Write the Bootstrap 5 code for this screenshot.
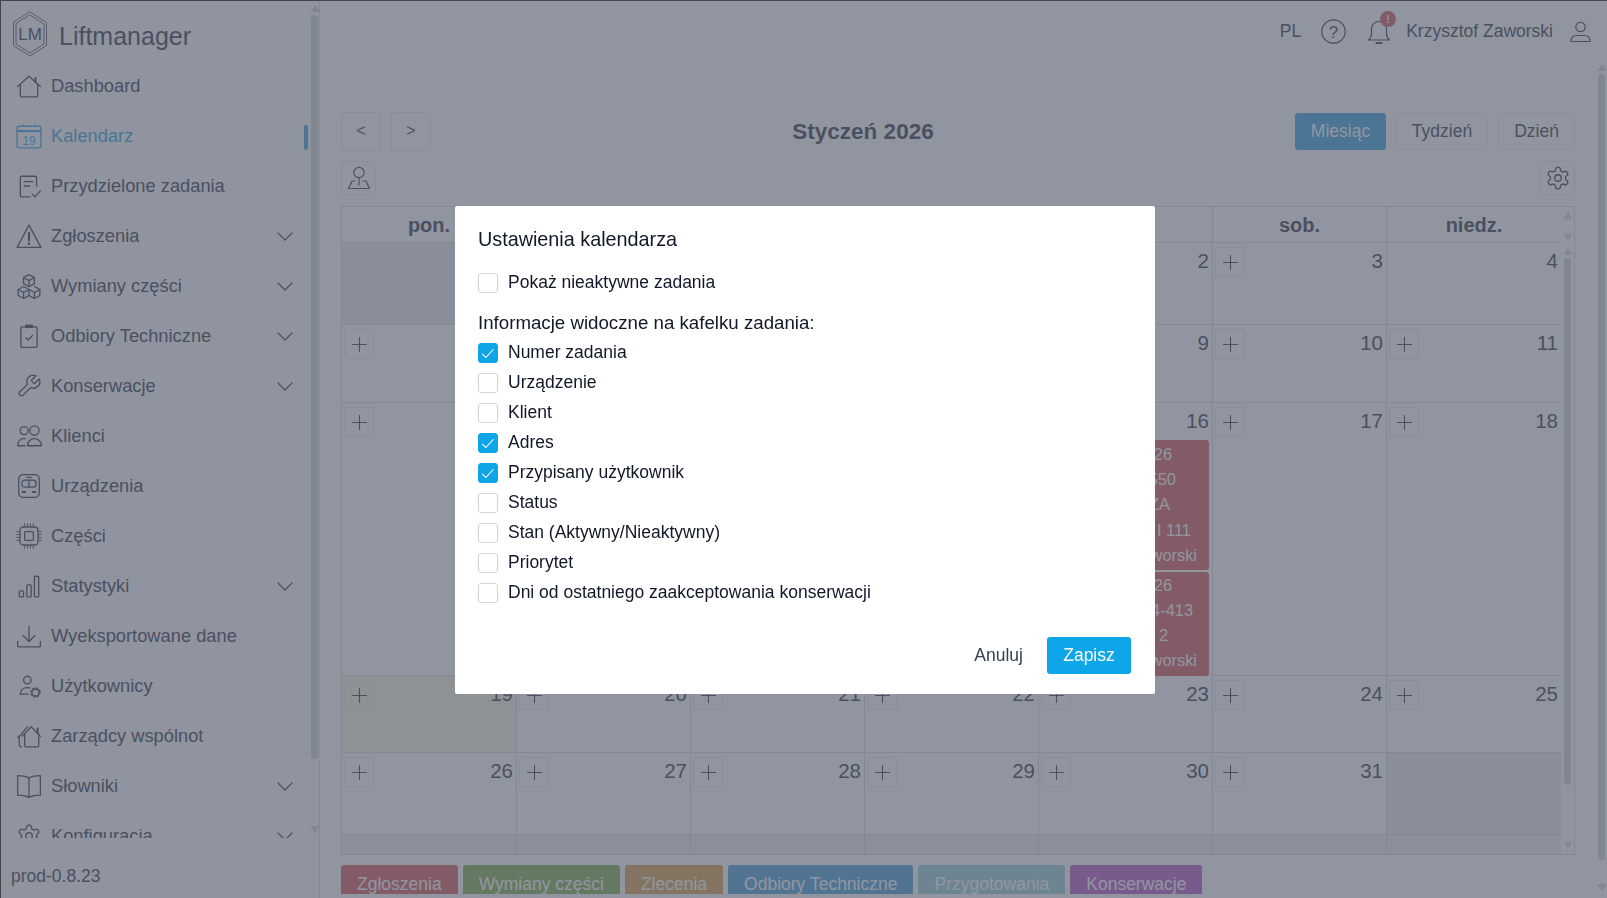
<!DOCTYPE html>
<html lang="pl">
<head>
  <meta charset="UTF-8" />
  <title>Liftmanager</title>
  <meta name="viewport" content="width=device-width, initial-scale=1.0" />
  <link href="https://cdn.jsdelivr.net/npm/bootstrap@5.3.0/dist/css/bootstrap.min.css" rel="stylesheet">
  <style>
    html, body { height: 100%; overflow: hidden; }
    body { font-family: "Liberation Sans", Arial, sans-serif; font-size: 17.5px; line-height: 1.3; color: #72757f; background: #fff; }
    svg.ico { fill: none; stroke: currentColor; stroke-width: 1.2; stroke-linecap: round; stroke-linejoin: round; flex: none; }

    .app { height: 898px; }
    .side { width: 320px; flex: none; border-right: 1px solid #e6e7ea; background: #fcfcfd; }
    .side-scroll { height: 838px; overflow: hidden; flex: none; }
    .side-items { width: 311px; flex: none; }
    .brand { height: 61px; padding: 11px 0 0 12px; gap: 11px; font-size: 25px; flex: none; }
    .brand svg.ico { stroke-width: .8; }
    .brand-name { margin-top: 9px; }
    .side-link { height: 50px; padding-left: 16px; padding-right: 18px; color: #72757f; font-size: 18.3px; text-decoration: none; position: relative; flex: none; }
    .side-link svg.ico { width: 26px; height: 26px; margin-right: 9px; }
    .side-link.on { color: #72bce8; }
    .side-link.on::after { content: ""; position: absolute; right: 3px; top: 14px; width: 4px; height: 25px; border-radius: 2px; background: #72bce8; }
    .side-link svg.chev { width: 16px; height: 16px; margin: 0 0 0 auto; }
    .version { padding: 27px 0 0 11px; }

    .vbar { display: flex; flex-direction: column; align-items: center; flex: none; }
    .vbar i { display: block; width: 0; height: 0; border-left: 5px solid transparent; border-right: 5px solid transparent; flex: none; }
    .vbar i.up { border-bottom: 7px solid #dfe0e4; }
    .vbar i.down { border-top: 7px solid #dfe0e4; margin-top: auto; }
    .vbar b { display: block; width: 100%; background: #dfe0e4; border-radius: 4px; flex: none; }
    .vbar-side { width: 7px; height: 838px; padding: 5px 0; }
    .vbar-side b { height: 744px; margin-top: 3px; }
    .vbar-page { width: 7px; margin-left: 23px; padding: 3px 0 7px; }
    .vbar-page b { height: 786px; margin-top: 3px; }
    .vbar-head { width: 13px; height: 36px; padding: 5px 0 2px; }
    .vbar-body { width: 13px; height: 611px; padding: 5px 0; }
    .vbar-body b { width: 7px; height: 527px; margin-top: 3px; }
    .vbar-body i, .vbar-head i { border-left-width: 4px; border-right-width: 4px; }

    .main { min-width: 0; }
    .top-bar { height: 61px; padding: 2px 16px 0 0; }
    .tg-15 { margin-left: 15px; } .tg-17 { margin-left: 17px; } .tg-20 { margin-left: 20px; } .tg-21 { margin-left: 21px; }
    .bell-wrap { position: relative; display: flex; }
    .bell-dot { position: absolute; left: 13px; top: -8px; width: 16px; height: 16px; border-radius: 50%; background: #e08a8c; color: #fff; font-size: 11px; font-weight: 700; line-height: 16px; text-align: center; }
    .page { padding-left: 21px; }
    .page-inner { width: 1234px; flex: none; }

    .tool { background: transparent; border: 1px solid #f0f0f2; border-radius: 3px; color: #72757f; font-size: 17.5px; padding: 0; display: flex; align-items: center; justify-content: center; }
    .tool-nav { width: 40px; height: 39px; font-size: 16px; }
    .tool-view { height: 37px; }
    .tv-m { width: 91px; } .tv-t { width: 92px; } .tv-d { width: 77px; }
    .tool-view.on { background: #72bce8; border-color: #72bce8; color: #fff; }
    .tool-ico { width: 35px; height: 34px; }
    .tool-row { gap: 10px; }
    .cal-title { font-size: 22.5px; font-weight: 700; margin: 0; color: #72757f; }
    .nav-row { margin-top: 51px; height: 39px; }
    .opt-row { margin-top: 10px; height: 34px; }

    .cal-box { margin-top: 11px; width: 1234px; height: 649px; border: 1px solid #e4e5e8; }
    .cal-grid { display: grid; grid-template-columns: 175px repeat(6, 174px); grid-template-rows: 36px 82px 78px 273px 77px 82px 19px; width: 1219px; flex: none; }
    .cal-head { font-weight: 700; font-size: 20px; text-align: center; line-height: 36px; border-right: 1px solid #e4e5e8; border-bottom: 1px solid #e4e5e8; }
    .cal-cell { border-right: 1px solid #e4e5e8; border-bottom: 1px solid #e4e5e8; padding: 4px 3px 0 2px; position: relative; min-width: 0; }
    .cal-cell:nth-child(7n), .cal-head:nth-child(7) { border-right: 0; }
    .cal-cell.off { background: #f1f1f2; }
    .cal-cell.now { background: #f9f8e6; }
    .cal-cell.tail { background: #f3f3f1; padding: 0; border-bottom: 0; }
    .add-btn { width: 30px; height: 30px; padding: 0; border: 1px solid #f0f0f2; border-radius: 2px; background: transparent; color: #72757f; display: flex; align-items: center; justify-content: center; }
    .add-btn svg.ico { stroke-width: 1.1; }
    .day-no { font-size: 20.5px; line-height: 28px; }
    .tile { position: absolute; left: 3px; right: 3px; background: #e08a8c; border-radius: 3px; color: #fff; font-size: 16.4px; line-height: 25.2px; text-align: right; }
    .tile-a { top: 37px; height: 130px; padding-top: 2px; }
    .tile-b { top: 168.5px; height: 104px; padding-top: 1px; }
    .pr12 { padding-right: 12px; } .pr16 { padding-right: 16px; } .pr18 { padding-right: 18px; }
    .pr33 { padding-right: 33px; } .pr37 { padding-right: 37px; } .pr39 { padding-right: 39px; } .pr41 { padding-right: 41px; }

    .legend { margin-top: 10px; height: 29px; overflow: hidden; gap: 5px; }
    .legend span { height: 40px; border-radius: 3px; color: #fff; padding: 8px 16px 0; display: block; }
    .lg-1 { background: #e08a8c; } .lg-2 { background: #a3c783; } .lg-3 { background: #e3be80; }
    .lg-4 { background: #7cbde0; } .lg-5 { background: #b4dedf; } .lg-6 { background: #cf88d6; }

    .modal-backdrop.show { --bs-backdrop-bg: rgb(35, 43, 65); --bs-backdrop-opacity: .5; }
    .edge { position: fixed; inset: 0 0 auto 0; height: 1px; background: #43454e; z-index: 1060; }
    .edge-left { position: fixed; inset: 0 auto 0 0; width: 1px; background: #43454e; z-index: 1060; }
    .modal.d-block { overflow: hidden; }
    .modal-dialog.set-dialog { max-width: 700px; width: 700px; margin: 206px 0 0 455px; }
    .set-dialog .modal-content { height: 488px; border: 0; border-radius: 2px; color: #111827; }
    .set-dialog .modal-header { padding: 18px 23px 0; border: 0; }
    .set-dialog .modal-title { font-size: 19.8px; line-height: 30px; }
    .set-dialog .modal-body { padding: 13px 23px 0; flex: none; }
    .set-dialog .modal-footer { padding: 0 24px 20px; border: 0; margin-top: auto; gap: 24px; }
    .set-dialog .modal-footer > * { margin: 0; }
    .opt-line { height: 30px; gap: 10px; margin: 0; padding: 0; min-height: 0; }
    .opt-line .form-check-input { width: 20px; height: 20px; margin: 2px 0 0; flex: none; float: none; border-color: #d2d4d8; border-radius: 3px; }
    .opt-line .form-check-input:checked { background-color: #0ea5e9; border-color: #0ea5e9; background-image: url("data:image/svg+xml,%3csvg xmlns='http://www.w3.org/2000/svg' viewBox='0 0 20 20'%3e%3cpath fill='none' stroke='%23fff' stroke-width='1.2' d='M3.5 11l4 4 8.500-9'/%3e%3c/svg%3e"); background-size: 100%; }
    .opt-line label { line-height: 26px; }
    .info-line { margin: 12px 0 0; height: 28px; line-height: 28px; font-size: 18.7px; }
    .btn-cancel { color: #374151; font-size: 17.5px; padding: 0; border: 0; background: none; }
    .btn-save { width: 84px; height: 37px; background: #0ea5e9; color: #fff; border: 0; border-radius: 3px; font-size: 17.5px; padding: 0; }
    .btn-save:hover { background: #0ea5e9; color: #fff; }
  </style>
</head>
<body>
<div class="app d-flex">
  <div class="side d-flex flex-column">
    <div class="side-scroll d-flex">
      <div class="side-items d-flex flex-column">
        <div class="brand d-flex align-items-start">
          <svg class="ico" width="36" height="46" viewBox="0 0 36 46">
            <path d="M18 1l16.500 10.500v23L18 45 1.500 34.500v-23z"/>
            <path d="M18 4l14 9v20l-14 9-14-9V13z"/>
            <text x="18" y="28.500" text-anchor="middle" font-size="17" fill="currentColor" stroke="none" font-family="Liberation Sans, sans-serif">LM</text>
          </svg>
          <span class="brand-name">Liftmanager</span>
        </div>
        <div id="sideLinks" class="d-flex flex-column flex-shrink-0"></div>
      </div>
      <div class="vbar vbar-side"><i class="up"></i><b></b><i class="down"></i></div>
    </div>
    <div class="version">prod-0.8.23</div>
  </div>

  <div class="main flex-grow-1 d-flex flex-column">
    <div class="top-bar d-flex align-items-center justify-content-end">
      <span>PL</span>
      <svg class="ico tg-20" width="25" height="25" viewBox="0 0 25 25">
        <circle cx="12.500" cy="12.500" r="11.700"/>
        <text x="12.500" y="18.500" text-anchor="middle" font-size="17" fill="currentColor" stroke="none" font-family="Liberation Sans, sans-serif">?</text>
      </svg>
      <div class="bell-wrap tg-21">
        <svg class="ico" width="24" height="26" viewBox="0 0 24 26">
          <path d="M1.500 21h21c-1.700-1.500-3-3-3-6.500V10a7.500 7.500 0 0 0-15 0v4.500c0 3.500-1.300 5-3 6.500z"/>
          <path d="M9.500 24h5" stroke-width="2.200"/>
        </svg>
        <span class="bell-dot">!</span>
      </div>
      <span class="tg-15">Krzysztof Zaworski</span>
      <svg class="ico tg-17" width="21" height="22" viewBox="0 0 21 22">
        <circle cx="10.500" cy="6" r="4.700"/>
        <path d="M1 20.500v-1c0-3 2.500-5 5-5h9c2.500 0 5 2 5 5v1z"/>
      </svg>
    </div>

    <div class="page d-flex flex-grow-1">
      <div class="page-inner d-flex flex-column">
        <div class="nav-row d-flex justify-content-between align-items-center">
          <div class="tool-row d-flex"><button class="tool tool-nav">&lt;</button><button class="tool tool-nav">&gt;</button></div>
          <h1 class="cal-title">Styczeń 2026</h1>
          <div class="tool-row d-flex">
            <button class="tool tool-view tv-m on">Miesiąc</button>
            <button class="tool tool-view tv-t">Tydzień</button>
            <button class="tool tool-view tv-d">Dzień</button>
          </div>
        </div>
        <div class="opt-row d-flex justify-content-between">
          <button class="tool tool-ico">
            <svg class="ico" width="24" height="24" viewBox="0 0 24 24"><circle cx="12" cy="6.500" r="5.200"/><path d="M12 11.700v7.300"/><path d="M8 15H5L1.500 22.500h21L19 15h-3"/></svg>
          </button>
          <button class="tool tool-ico">
            <svg class="ico" width="26" height="26" viewBox="0 0 24 24"><path d="M12.220 2h-.44a2 2 0 0 0-2 2v.18a2 2 0 0 1-1 1.730l-.43.25a2 2 0 0 1-2 0l-.15-.08a2 2 0 0 0-2.730.73l-.22.38a2 2 0 0 0 .73 2.730l.15.1a2 2 0 0 1 1 1.720v.51a2 2 0 0 1-1 1.740l-.15.09a2 2 0 0 0-.73 2.730l.22.38a2 2 0 0 0 2.730.73l.15-.08a2 2 0 0 1 2 0l.43.25a2 2 0 0 1 1 1.730V20a2 2 0 0 0 2 2h.44a2 2 0 0 0 2-2v-.18a2 2 0 0 1 1-1.730l.43-.25a2 2 0 0 1 2 0l.15.08a2 2 0 0 0 2.730-.73l.22-.39a2 2 0 0 0-.73-2.730l-.15-.08a2 2 0 0 1-1-1.740v-.5a2 2 0 0 1 1-1.740l.15-.09a2 2 0 0 0 .73-2.730l-.22-.38a2 2 0 0 0-2.730-.73l-.15.08a2 2 0 0 1-2 0l-.43-.25a2 2 0 0 1-1-1.730V4a2 2 0 0 0-2-2z"/><circle cx="12" cy="12" r="3"/></svg>
          </button>
        </div>
        <div class="cal-box d-flex">
          <div class="cal-grid" id="calGrid"></div>
          <div class="d-flex flex-column">
            <div class="vbar vbar-head"><i class="up"></i><i class="down"></i></div>
            <div class="vbar vbar-body"><i class="up"></i><b></b><i class="down"></i></div>
          </div>
        </div>
        <div class="legend d-flex">
          <span class="lg-1">Zgłoszenia</span>
          <span class="lg-2">Wymiany części</span>
          <span class="lg-3">Zlecenia</span>
          <span class="lg-4">Odbiory Techniczne</span>
          <span class="lg-5">Przygotowania</span>
          <span class="lg-6">Konserwacje</span>
        </div>
      </div>
      <div class="vbar vbar-page"><i class="up"></i><b></b><i class="down"></i></div>
    </div>
  </div>
</div>

<div class="modal-backdrop show"></div>
<div class="edge"></div>
<div class="edge-left"></div>

<div class="modal d-block" tabindex="-1">
  <div class="modal-dialog set-dialog">
    <div class="modal-content">
      <div class="modal-header">
        <h5 class="modal-title">Ustawienia kalendarza</h5>
      </div>
      <div class="modal-body">
        <div class="form-check opt-line d-flex align-items-center">
          <input class="form-check-input" type="checkbox" id="optInactive">
          <label for="optInactive">Pokaż nieaktywne zadania</label>
        </div>
        <p class="info-line">Informacje widoczne na kafelku zadania:</p>
        <div id="optList"></div>
      </div>
      <div class="modal-footer">
        <button class="btn-cancel">Anuluj</button>
        <button class="btn btn-save">Zapisz</button>
      </div>
    </div>
  </div>
</div>

<script>
  const gear = '<path d="M12.220 2h-.44a2 2 0 0 0-2 2v.18a2 2 0 0 1-1 1.730l-.43.25a2 2 0 0 1-2 0l-.15-.08a2 2 0 0 0-2.730.73l-.22.38a2 2 0 0 0 .73 2.730l.15.1a2 2 0 0 1 1 1.720v.51a2 2 0 0 1-1 1.740l-.15.09a2 2 0 0 0-.73 2.730l.22.38a2 2 0 0 0 2.730.73l.15-.08a2 2 0 0 1 2 0l.43.25a2 2 0 0 1 1 1.730V20a2 2 0 0 0 2 2h.44a2 2 0 0 0 2-2v-.18a2 2 0 0 1 1-1.730l.43-.25a2 2 0 0 1 2 0l.15.08a2 2 0 0 0 2.730-.73l.22-.39a2 2 0 0 0-.73-2.730l-.15-.08a2 2 0 0 1-1-1.740v-.5a2 2 0 0 1 1-1.740l.15-.09a2 2 0 0 0 .73-2.730l-.22-.38a2 2 0 0 0-2.730-.73l-.15.08a2 2 0 0 1-2 0l-.43-.25a2 2 0 0 1-1-1.730V4a2 2 0 0 0-2-2z"/><circle cx="12" cy="12" r="3"/>';
  const links = [
    ["Dashboard", '<path d="M1.500 12.500L12 3l10.500 9.500"/><path d="M4 10.500V21a1 1 0 0 0 1 1h14a1 1 0 0 0 1-1V10.500"/><path d="M18 4.500v4" stroke-width="1.800"/>', false],
    ["Kalendarz", '<rect x="1" y="3" width="22" height="20" rx="1.500"/><path d="M1.500 7.500h21" stroke-width="2"/><path d="M6.500 1.500V3M17.500 1.500V3"/><text x="12" y="20" text-anchor="middle" font-size="11" fill="currentColor" stroke="none" font-family="Liberation Sans, sans-serif">19</text>', false],
    ["Przydzielone zadania", '<path d="M19 12V4.500A1.500 1.500 0 0 0 17.500 3h-12A1.500 1.500 0 0 0 4 4.500v16A1.500 1.500 0 0 0 5.500 22H13"/><path d="M7.500 8h8M7.500 12h5"/><path d="M15 19.500l2.500 2.500 5-5.500"/>', false],
    ["Zgłoszenia", '<path d="M12 2L23 22.500H1z"/><path d="M12 9v7" stroke-width="2"/><path d="M12 18.700v.6" stroke-width="2"/>', true],
    ["Wymiany części", '<path d="M12 1.500l5 2.700v5.600L12 12.500 7 9.800V4.200z"/><path d="M7 4.200L12 7l5-2.800M12 7v5.500"/><path d="M7 12.500l5 2.700v5.600L7 23.500 2 20.800v-5.600z"/><path d="M2 15.200L7 18l5-2.800M7 18v5.500"/><path d="M17 12.500l5 2.700v5.600l-5 2.700-5-2.700"/><path d="M12 15.200L17 18l5-2.800M17 18v5.500"/>', true],
    ["Odbiory Techniczne", '<rect x="4.500" y="3.500" width="15" height="19" rx="1.200"/><path d="M9 2h6v2H9z" fill="currentColor"/><path d="M9 13.500l2.200 2.200 4-4.200"/>', true],
    ["Konserwacje", '<path d="M14.700 6.300a1 1 0 0 0 0 1.400l1.600 1.600a1 1 0 0 0 1.400 0l3.770-3.770a6 6 0 0 1-7.940 7.940l-6.910 6.910a2.120 2.120 0 0 1-3-3l6.910-6.910a6 6 0 0 1 7.940-7.940l-3.760 3.760z"/>', true],
    ["Klienci", '<circle cx="7.500" cy="7" r="3.700"/><circle cx="17" cy="7" r="4.300"/><path d="M10.500 21c0-3.800 2.800-6.500 6.500-6.500s6.500 2.700 6.500 6.500z"/><path d="M8.500 14.500H6C3.500 14.500 1.700 18 1.500 21H8"/>', false],
    ["Urządzenia", '<rect x="2.500" y="1.500" width="19" height="21" rx="4"/><rect x="5.500" y="6.500" width="13" height="6.500" rx="2.500"/><path d="M12 6.500V13M10 4h4"/><path d="M6 17.500h2.500M15.500 17.500H18" stroke-width="1.800"/>', false],
    ["Części", '<rect x="3.700" y="3.700" width="16.600" height="16.600" rx="3"/><rect x="8" y="8" width="8" height="8" rx=".8"/><path d="M8 .8v2M10.700 .8v2M13.300 .8v2M16 .8v2M8 21.200v2M10.700 21.200v2M13.300 21.200v2M16 21.200v2M.8 8h2M.8 10.700h2M.8 13.300h2M.8 16h2M21.200 8h2M21.200 10.700h2M21.200 13.300h2M21.200 16h2" stroke-width=".9"/>', false],
    ["Statystyki", '<rect x="3" y="16.500" width="4" height="5.500" rx=".8"/><rect x="10" y="11" width="4" height="11" rx=".8"/><rect x="17" y="3" width="4" height="19" rx=".8"/>', true],
    ["Wyeksportowane dane", '<path d="M12 3v14M6.500 11.500L12 17l5.500-5.500"/><path d="M1.500 17v4a1 1 0 0 0 1 1h19a1 1 0 0 0 1-1v-4"/>', false],
    ["Użytkownicy", '<circle cx="10.500" cy="6.500" r="3.500"/><path d="M4 19.500c0-3.500 2.500-6 6.500-6 1 0 1.500.1 2 .3"/><path d="M4 19.500h7"/><circle cx="18" cy="18" r="3.300" stroke-width="1.300"/><circle cx="18" cy="18" r="4.200" stroke-width="1.200" stroke-dasharray="1.300 2"/>', false],
    ["Zarządcy wspólnot", '<path d="M6 12L14 3.500l8.500 9"/><path d="M8 10v11a1 1 0 0 0 1 1h11a1 1 0 0 0 1-1V10"/><path d="M20 5v4" stroke-width="1.800"/><path d="M5 22c-1.500 0-2-1-2-2v-7.500L10.500 3.500"/><path d="M1.500 13.500L3 12"/>', false],
    ["Słowniki", '<path d="M12 4.500C9 3 5.500 2.500 1.500 2.500V20.500c4 0 7.500.5 10.500 2 3-1.500 6.500-2 10.500-2V2.500c-4 0-7.500.5-10.500 2z"/><path d="M12 4.500v18"/>', true],
    ["Konfiguracja", gear, true]
  ];
  const chev = '<svg class="ico chev" viewBox="0 0 16 16"><path d="M1 5l7 7 7-7"/></svg>';
  document.getElementById("sideLinks").innerHTML = links.map(([name, ico, more], i) => `
    <a href="#" class="side-link d-flex align-items-center${i === 1 ? " on" : ""}">
      <svg class="ico" viewBox="0 0 24 24">${ico}</svg><span>${name}</span>${more ? chev : ""}
    </a>`).join("");

  const plus = '<svg class="ico" width="15" height="15" viewBox="0 0 15 15"><path d="M7.500 .5v14M.5 7.500h14"/></svg>';
  const heads = ["pon.", "wt.", "śr.", "czw.", "pt.", "sob.", "niedz."];
  let html = heads.map(h => `<div class="cal-head">${h}</div>`).join("");
  const lines1 = [["26", "pr37"], ["550", "pr33"], ["ZA", "pr39"], ["I 111", "pr18"], ["worski", "pr12"]];
  const lines2 = [["26", "pr37"], ["4-413", "pr16"], ["2", "pr41"], ["worski", "pr12"]];
  for (let i = 0; i < 35; i++) {
    const day = i - 2;
    if (day < 1 || day > 31) { html += `<div class="cal-cell off"></div>`; continue; }
    const tiles = day === 16
      ? `<div class="tile tile-a">${lines1.map(l => `<div class="${l[1]}">${l[0]}</div>`).join("")}</div>
         <div class="tile tile-b">${lines2.map(l => `<div class="${l[1]}">${l[0]}</div>`).join("")}</div>` : "";
    html += `<div class="cal-cell d-flex justify-content-between${day === 19 ? " now" : ""}">
      ${day === 4 ? "<span></span>" : `<button class="add-btn">${plus}</button>`}<span class="day-no">${day}</span>${tiles}</div>`;
  }
  for (let i = 0; i < 7; i++) html += `<div class="cal-cell tail"></div>`;
  document.getElementById("calGrid").innerHTML = html;

  const opts = [["Numer zadania", 1], ["Urządzenie", 0], ["Klient", 0], ["Adres", 1], ["Przypisany użytkownik", 1],
    ["Status", 0], ["Stan (Aktywny/Nieaktywny)", 0], ["Priorytet", 0], ["Dni od ostatniego zaakceptowania konserwacji", 0]];
  document.getElementById("optList").innerHTML = opts.map(([t, on], i) => `
    <div class="form-check opt-line d-flex align-items-center">
      <input class="form-check-input" type="checkbox" id="opt${i}"${on ? " checked" : ""}>
      <label for="opt${i}">${t}</label>
    </div>`).join("");
</script>
</body>
</html>
